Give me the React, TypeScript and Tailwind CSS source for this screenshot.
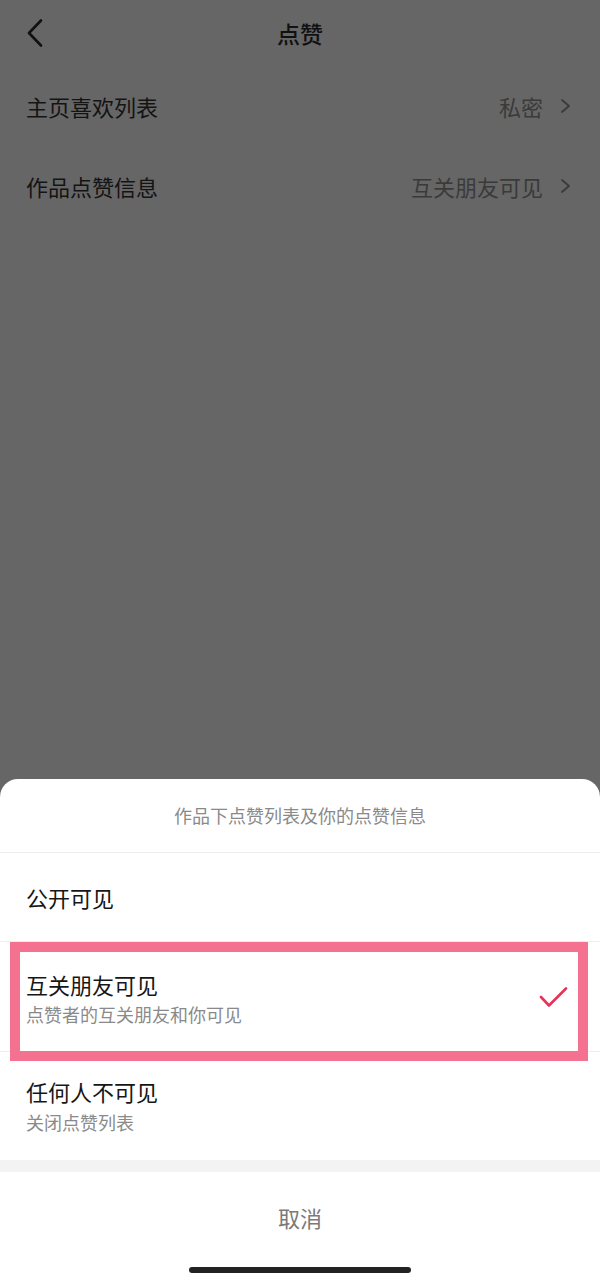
const options = [
  { title: '公开可见', hint: '' },
  { title: '互关朋友可见', hint: '点赞者的互关朋友和你可见', selected: true },
  { title: '任何人不可见', hint: '关闭点赞列表' },
];

const settings = [
  { label: '主页喜欢列表', value: '私密' },
  { label: '作品点赞信息', value: '互关朋友可见' },
];

function BackIcon() {
  return (
    <svg width="18" height="28" viewBox="0 0 18 28" fill="none">
      <path d="M15 1.5 L3 14 L15 26.5" stroke="#111" strokeWidth="2.6" strokeLinecap="round" strokeLinejoin="round" />
    </svg>
  );
}

function ChevronRight() {
  return (
    <svg width="11" height="16" viewBox="0 0 11 16" fill="none">
      <path d="M2 2 L9 8 L2 14" stroke="#3a3a3a" strokeWidth="1.8" strokeLinecap="round" strokeLinejoin="round" />
    </svg>
  );
}

function CheckIcon() {
  return (
    <svg width="30" height="22" viewBox="0 0 30 22" fill="none">
      <path d="M3 10 L11 18.5 L28 1.5" stroke="#e8325a" strokeWidth="2.6" strokeLinecap="round" strokeLinejoin="round" />
    </svg>
  );
}

export default function App() {
  return (
    <div
      className="h-[1282px] w-[600px] bg-[#666666] flex flex-col"
      style={{ fontFamily: '"Noto Sans CJK SC", "Noto Sans", sans-serif' }}
    >
      {/* dimmed settings page behind the sheet */}
      <div className="flex-1">
        <div className="relative h-[66px] flex items-center justify-center pt-[1px]">
          <div className="absolute left-[26px] top-[19px]">
            <BackIcon />
          </div>
          <h1 className="text-[23px] font-medium text-[#111]">点赞</h1>
        </div>
        {settings.map((row) => (
          <div key={row.label} className="h-[80px] flex items-center justify-between pl-[26px] pr-[29px]">
            <span className="text-[22px] text-[#141414]">{row.label}</span>
            <div className="flex items-center gap-[17px]">
              <span className="text-[22px] text-[#3a3a3a]">{row.value}</span>
              <ChevronRight />
            </div>
          </div>
        ))}
      </div>

      {/* bottom sheet */}
      <div className="bg-white rounded-t-[18px]">
        <div className="h-[74px] flex items-center justify-center border-b border-[#eeeeee]">
          <span className="text-[18px] text-[#8a8a8a]">作品下点赞列表及你的点赞信息</span>
        </div>

        <div className="h-[89px] flex items-center pl-[26px] border-b border-[#eeeeee]">
          <span className="text-[22px] text-[#161616]">{options[0].title}</span>
        </div>

        <div className="relative flex items-center justify-between pl-[26px] pr-[32px] pt-[27px] pb-[24px] border-b border-[#eeeeee]">
          <div className="flex flex-col gap-[2px]">
            <span className="text-[22px] leading-[30px] text-[#161616]">{options[1].title}</span>
            <span className="text-[18px] leading-[26px] text-[#8a8a8a]">{options[1].hint}</span>
          </div>
          <CheckIcon />
          <div className="absolute left-[10px] right-[12px] top-0 -bottom-[10px] border-[10px] border-[#f4718f]" />
        </div>

        <div className="flex flex-col gap-[3px] pl-[26px] pt-[24px] pb-[25px]">
          <span className="text-[22px] leading-[30px] text-[#161616]">{options[2].title}</span>
          <span className="text-[18px] leading-[26px] text-[#8a8a8a]">{options[2].hint}</span>
        </div>

        <div className="h-[12px] bg-[#f3f3f3]" />

        <div className="h-[110px] flex flex-col items-center">
          <span className="mt-[30px] text-[22px] leading-[30px] text-[#7a7a7a]">取消</span>
          <div className="mt-auto mb-[9px] w-[222px] h-[6px] rounded-full bg-[#222]" />
        </div>
      </div>
    </div>
  );
}
